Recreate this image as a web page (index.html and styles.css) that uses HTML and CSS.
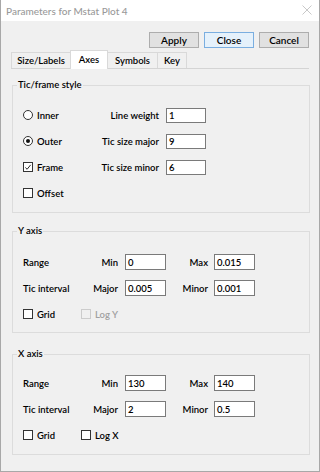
FILE: index.html
```html
<!DOCTYPE html>
<html>
<head>
<meta charset="utf-8">
<link rel="stylesheet" href="styles.css">
</head>
<body>
<div class="window">
  <div class="titlebar">
    <span class="title">Parameters for Mstat Plot 4</span>
    <svg class="xicon" width="10" height="10" viewBox="0 0 10 10"><path d="M0.5 0.5 L9.5 9.5 M9.5 0.5 L0.5 9.5" stroke="#c8c8c8" stroke-width="1"/></svg>
  </div>
  <div class="content">
    <div class="buttons">
      <button class="btn">Apply</button>
      <button class="btn default">Close</button>
      <button class="btn">Cancel</button>
    </div>
    <div class="tabs">
      <div class="tab t1">Size/Labels</div>
      <div class="tab t2 active">Axes</div>
      <div class="tab t3">Symbols</div>
      <div class="tab t4">Key</div>
    </div>
    <div class="page">
      <fieldset class="group g1">
        <legend>Tic/frame style</legend>
        <div class="grid-tic">
          <label class="opt"><span class="radio"></span>Inner</label>
          <span class="lbl">Line weight</span>
          <span class="input">1</span>

          <label class="opt"><span class="radio on"></span>Outer</label>
          <span class="lbl">Tic size major</span>
          <span class="input">9</span>

          <label class="opt"><span class="check on"><svg width="9" height="9" viewBox="0 0 9 9"><path d="M1.5 4.5 L3.5 6.5 L7.5 1.5" fill="none" stroke="#222" stroke-width="1.1"/></svg></span>Frame</label>
          <span class="lbl">Tic size minor</span>
          <span class="input">6</span>

          <label class="opt"><span class="check"></span>Offset</label>
          <span></span>
          <span></span>
        </div>
      </fieldset>

      <fieldset class="group g2">
        <legend>Y axis</legend>
        <div class="grid-axis">
          <span class="name">Range</span>
          <span class="lbl">Min</span>
          <span class="input">0</span>
          <span class="lbl l2">Max</span>
          <span class="input">0.015</span>

          <span class="name">Tic interval</span>
          <span class="lbl">Major</span>
          <span class="input">0.005</span>
          <span class="lbl l2">Minor</span>
          <span class="input">0.001</span>

          <label class="opt"><span class="check"></span>Grid</label>
          <label class="opt log disabled"><span class="check"></span>Log Y</label>
        </div>
      </fieldset>

      <fieldset class="group g3">
        <legend>X axis</legend>
        <div class="grid-axis">
          <span class="name">Range</span>
          <span class="lbl">Min</span>
          <span class="input">130</span>
          <span class="lbl l2">Max</span>
          <span class="input">140</span>

          <span class="name">Tic interval</span>
          <span class="lbl">Major</span>
          <span class="input">2</span>
          <span class="lbl l2">Minor</span>
          <span class="input">0.5</span>

          <label class="opt"><span class="check"></span>Grid</label>
          <label class="opt log"><span class="check"></span>Log X</label>
        </div>
      </fieldset>
    </div>
  </div>
</div>
</body>
</html>
```
FILE: styles.css
```css
* { box-sizing: border-box; }
html, body { margin: 0; padding: 0; }
body {
  width: 320px;
  height: 472px;
  font-family: "Lato", "Open Sans", sans-serif;
  font-size: 9.5px;
  font-weight: 600;
  color: #000;
  background: #f0f0f0;
  overflow: hidden;
}
.window {
  width: 320px;
  height: 472px;
  border: 1px solid #a8a8a8;
  border-top: none;
  background: #f0f0f0;
  display: flex;
  flex-direction: column;
}
.titlebar {
  height: 21px;
  background: #fff;
  display: flex;
  align-items: center;
  justify-content: space-between;
  padding: 0 7px 0 5px;
  flex: none;
}
.title {
  color: #9a9a9a;
  font-size: 10px;
  font-weight: 500;
}
.xicon { margin-top: -1px; }
.content {
  padding: 11px 10px 0 10px;
}
.buttons {
  display: flex;
  justify-content: flex-end;
  gap: 5px;
  height: 16px;
}
.btn {
  width: 50px;
  height: 16px;
  padding: 0;
  margin: 0;
  font-family: inherit;
  font-size: 10px;
  font-weight: 600;
  color: #000;
  background: #e1e1e1;
  border: 1px solid #adadad;
  line-height: 13px;
}
.btn.default {
  background: #e5f1fb;
  border-color: #7aaee0;
}
.tabs {
  display: flex;
  align-items: flex-end;
  margin-top: 4px;
  height: 17px;
  border-bottom: 1px solid #d4d4d4;
}
.tab {
  height: 16px;
  border: 1px solid #d9d9d9;
  border-bottom: none;
  margin-left: -1px;
  display: flex;
  align-items: center;
  justify-content: center;
  background: #f0f0f0;
}
.tab.t1 { width: 60px; margin-left: 0; }
.tab.t2 { width: 38px; }
.tab.t3 { width: 51px; }
.tab.t4 { width: 30px; }
.tab.active {
  background: #fff;
  height: 19px;
  margin-bottom: -1px;
  padding-bottom: 1px;
  position: relative;
  z-index: 1;
}
.page {
  padding: 10px 0 0 1px;
}
fieldset.group {
  margin: 0;
  padding: 0 0 0 10px;
  border: 1px solid #dcdcdc;
  width: 298px;
  min-width: 0;
}
fieldset.group legend {
  padding: 0 1px;
  margin-left: -6px;
  line-height: 12px;
}
fieldset.g1 { height: 134px; padding-top: 11px; }
fieldset.g2 { height: 108px; margin-top: 12px; padding-top: 12px; }
fieldset.g3 { height: 107px; margin-top: 15px; padding-top: 10px; }

.grid-tic {
  display: grid;
  grid-template-columns: 70px 73px 40px;
  grid-auto-rows: 26px;
  align-items: center;
}
.grid-axis {
  display: grid;
  grid-template-columns: 56px 46px 41px 48px 41px;
  grid-auto-rows: 26px;
  align-items: center;
}
.lbl { text-align: right; padding-right: 7px; white-space: nowrap; }
.grid-axis .lbl.l2 { padding-right: 6px; }
.name { white-space: nowrap; }
.input {
  display: flex;
  align-items: center;
  height: 16px;
  background: #fff;
  border: 1px solid #7a7a7a;
  padding-left: 2px;
}
.grid-tic .input { height: 15px; }
.opt {
  display: flex;
  align-items: center;
  gap: 4px;
  white-space: nowrap;
}
.opt.log {
  grid-column: 2 / 4;
  margin-left: 2px;
}
.opt.disabled { color: #a0a0a0; }
.radio {
  width: 10px;
  height: 10px;
  border: 1px solid #333;
  border-radius: 50%;
  background: #fff;
  display: flex;
  align-items: center;
  justify-content: center;
  flex: none;
}
.radio.on::after {
  content: "";
  width: 4px;
  height: 4px;
  border-radius: 50%;
  background: #111;
}
.check {
  width: 10px;
  height: 10px;
  border: 1px solid #333;
  background: #fff;
  display: flex;
  align-items: center;
  justify-content: center;
  flex: none;
}
.check svg { display: block; }
.opt.disabled .check { border-color: #cccccc; background: #f0f0f0; }
```
